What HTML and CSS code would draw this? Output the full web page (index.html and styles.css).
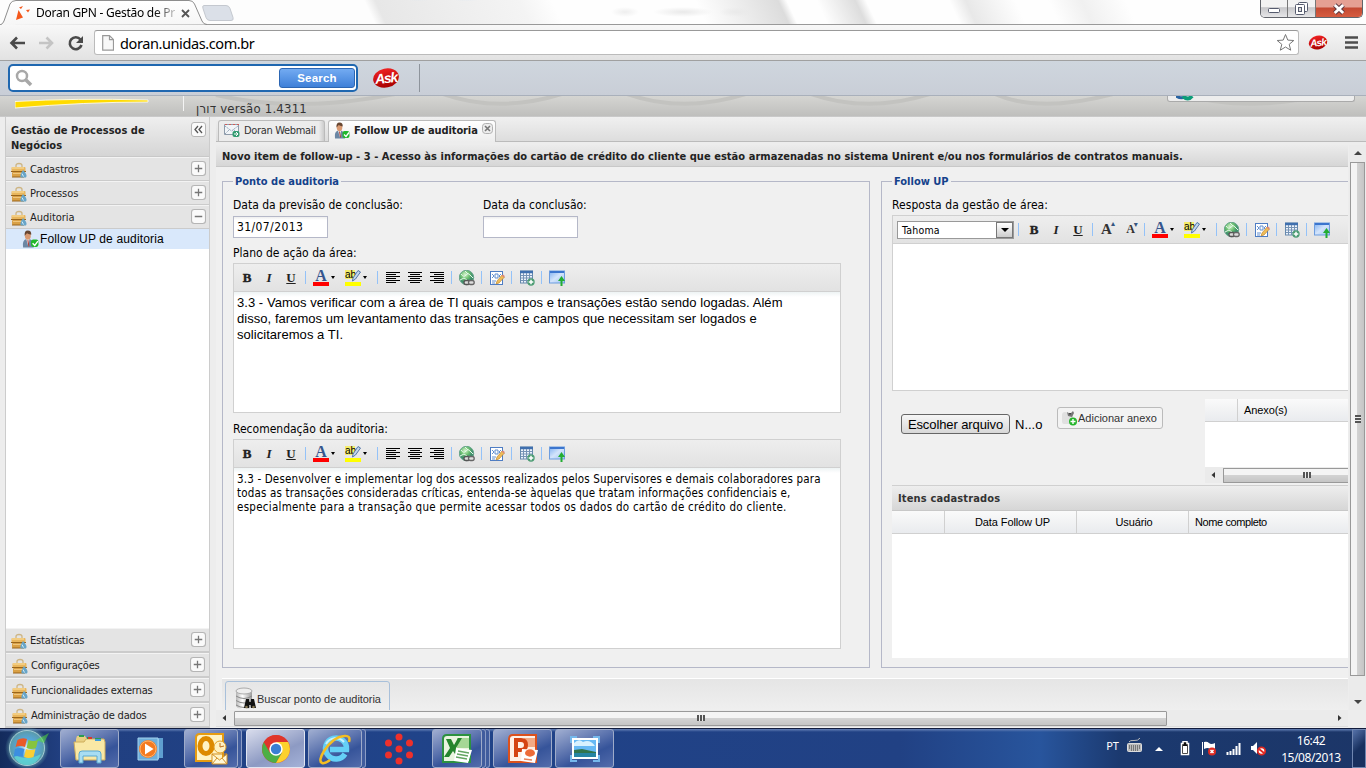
FILE: index.html
```html
<!DOCTYPE html>
<html lang="pt-BR">
<head>
<meta charset="utf-8">
<title>Doran GPN - Gestão de Processos de Negócios</title>
<link rel="stylesheet" href="styles.css">
</head>
<body>
<svg class="defs" width="0" height="0">
  <defs>
    <linearGradient id="gold" x1="0" y1="0" x2="0" y2="1"><stop offset="0" stop-color="#f3cf87"/><stop offset="1" stop-color="#c98a2c"/></linearGradient>
    <linearGradient id="sky" x1="0" y1="0" x2="1" y2="1"><stop offset="0" stop-color="#7fb0f0"/><stop offset=".5" stop-color="#d3e4fb"/><stop offset="1" stop-color="#9cc2f2"/></linearGradient>
    <linearGradient id="red" x1="0" y1="0" x2="0" y2="1"><stop offset="0" stop-color="#ee2222"/><stop offset="1" stop-color="#a80000"/></linearGradient>
    <radialGradient id="orb"><stop offset="0" stop-color="#e8f6ff"/><stop offset=".5" stop-color="#55a8dc"/><stop offset="1" stop-color="#5b9aa8"/></radialGradient>
    <radialGradient id="globe" cx=".4" cy=".3"><stop offset="0" stop-color="#d9f5d0"/><stop offset=".6" stop-color="#6cc070"/><stop offset="1" stop-color="#3f8f6c"/></radialGradient>
    <linearGradient id="steel"><stop offset="0" stop-color="#b5b5b5"/><stop offset=".4" stop-color="#fff"/><stop offset="1" stop-color="#999"/></linearGradient>
  </defs>
  <symbol id="i-case" viewBox="0 0 16 16"><path d="M5 5V3.500q0-2 3-2t3 2V5" fill="none" stroke="#cdb584" stroke-width="1.300"/><rect x=".5" y="5" width="14" height="4.500" rx="1" fill="#e9b65c"/><rect x="1" y="10" width="13" height="5" rx="1" fill="#d9a045"/><path d="M0 9.500h15M1 15h12" stroke="#99651c" fill="none"/><path d="M1 6h12" stroke="#fbe2a6"/><path d="M2 11.500h8" stroke="#f0c67d"/><path d="M12 8q5 5 3 7.500h-5q-2-2 2-7.500z" fill="#68a5c8"/><path d="M11 11.500l1.500 3" stroke="#d3edf8"/></symbol>
  <symbol id="i-user" viewBox="0 0 16 16"><path d="M1 16q-1-7 3-8h3q4 1 4 8z" fill="#6b87a4"/><path d="M4 8h3l-1 7z" fill="#f5f5f5"/><path d="M5.500 9l1 6" stroke="#b33e34"/><ellipse cx="5.500" cy="5" rx="2.800" ry="3.700" fill="#d99a72"/><path d="M2.500 5q-.5-5 3-5t3.200 4q-3-1-4-1.500z" fill="#674631"/><rect x="8.500" y="8.500" width="7" height="7" rx="2" fill="#20b82c"/><path d="M10 12l2 2 3-4" fill="none" stroke="#fff" stroke-width="1.300"/></symbol>
  <symbol id="i-mail" viewBox="0 0 16 16"><path d="M.5 2.500h14v10H.5z" fill="#f2f5f8" stroke="#8e9baa"/><path d="M1 2.500h14" stroke="#d05c58" stroke-dasharray="2 2"/><path d="M1 4l6.500 5L14 4M1 12l5-5m8 5L9 7" fill="none" stroke="#92a5b8" stroke-dasharray="1.500 .7"/><rect x="8.500" y="9" width="7" height="6" rx="2" fill="#309b70"/><path d="M10 12h4m-2-2l2 2-2 2" fill="none" stroke="#fff"/></symbol>
  <symbol id="i-globe" viewBox="0 0 16 16"><circle cx="7.500" cy="7.500" r="7.200" fill="url(#globe)" stroke="#69a58c"/><path d="M2 4q3 4 5 1t4 0l3 3M1 10l4-2 3 2M6 1l3 3" fill="none" stroke="#e3f8e9"/><rect x="5" y="10.500" width="6" height="4" rx="2" fill="#ddd" stroke="#555" stroke-width="1.300"/><rect x="9.500" y="10.500" width="5.700" height="4" rx="2" fill="#ddd" stroke="#666" stroke-width="1.300"/></symbol>
  <symbol id="i-edit" viewBox="0 0 16 16"><rect x="1.500" y="1.500" width="12" height="13" fill="#fff" stroke="#4e7dc4"/><path d="M3 4l2 2-2 2m9-4l-2 2 2 2M6 4h3v4H6zM3 11h4M3 13h3" fill="none" stroke="#628fcf"/><path d="M7 14l1-3 5-6 2.500 2-5.500 6z" fill="#f1bd58" stroke="#b07c2a" stroke-width=".6"/><path d="M12.500 5.500l1.500-1 1.800 1.500-1 1.400z" fill="#de8778"/></symbol>
  <symbol id="i-grid" viewBox="0 0 16 16"><rect x="1.500" y="1" width="12" height="12" fill="#edf3fb" stroke="#6689ad"/><path d="M1 2h13" stroke="#3f6fae" stroke-width="2.500"/><path d="M2 5.500h11M2 8h11M2 10.500h11M4.500 3v10M7.500 3v10M10.500 3v10" stroke="#7693b5"/><circle cx="12" cy="12" r="3.700" fill="#4c9c73"/><path d="M12 9.700v4.600M9.700 12h4.600" stroke="#fff" stroke-width="1.500"/></symbol>
  <symbol id="i-win" viewBox="0 0 16 16"><rect x=".5" y="1" width="15" height="12" fill="url(#sky)" stroke="#6d9ddf"/><path d="M1 2h14" stroke="#3b75ce" stroke-width="2"/><path d="M11.500 16v-5H9l3.500-5L16 11h-2.500v5z" fill="#23ad32"/></symbol>
  <symbol id="i-al" viewBox="0 0 14 12"><path d="M0 .5h14M0 2.500h10M0 4.500h14M0 6.500h10M0 8.500h14M0 10.500h10" stroke="#000"/></symbol>
  <symbol id="i-ac" viewBox="0 0 14 12"><path d="M0 .5h14M2 2.500h10M0 4.500h14M2 6.500h10M0 8.500h14M2 10.500h10" stroke="#000"/></symbol>
  <symbol id="i-ar" viewBox="0 0 14 12"><path d="M0 .5h14M4 2.500h10M0 4.500h14M4 6.500h10M0 8.500h14M4 10.500h10" stroke="#000"/></symbol>
  <symbol id="i-pen" viewBox="0 0 16 12"><path d="M8 8L13 .5l2.500 1.500-5 7L7.500 11z" fill="#c3d7ed" stroke="#5479a8"/></symbol>
  <symbol id="i-plus" viewBox="0 0 14 14"><rect x=".5" y=".5" width="13" height="13" rx="2.500" fill="#fafafa" stroke="#b5b5b5"/><path d="M3.500 7h7M7 3.500v7" stroke="#777" stroke-width="1.200"/></symbol>
</svg>

<header class="titlebar">
  <div class="glass"></div>
  <svg class="tabshape" width="240" height="25" viewBox="0 0 240 25"><defs><linearGradient id="tb" x1="0" y1="0" x2="0" y2="1"><stop offset="0" stop-color="#fff"/><stop offset="1" stop-color="#f6f6f6"/></linearGradient></defs><path d="M0 25Q3 24 4 21L10 4Q11.500.5 16 .5H189Q193 .5 194.500 4L202 21Q203.500 24.500 207 24.500" fill="url(#tb)" stroke="#8e8e8e"/><path d="M204 5.500h22q3 0 4 3l3 9q1 3-2 3h-21q-3 0-4-3l-3-9q-1-3 1-3z" fill="#dbe0e8" stroke="#c4c8cf"/></svg>
  <div class="browser-tab">
    <svg width="16" height="16" viewBox="0 0 16 16"><path d="M1 15L3.500 5 8 12.500zM4 2.500l4-1.500-2 3zM11 5l4-.5-2 3zM12 4l1-1" fill="#f4581c"/></svg>
    <span class="tab-title">Doran GPN - Gestão de Pr</span>
    <svg class="tab-x" width="9" height="9" viewBox="0 0 9 9"><path d="M1 1l7 7M8 1L1 8" stroke="#555" stroke-width="1.800"/></svg>
  </div>
  <div class="wincontrols">
    <span class="wc wc-min"><svg width="14" height="7"><rect x="1.500" y="1.500" width="11" height="4" rx="1" fill="#fff" stroke="#555b6e"/></svg></span>
    <span class="wc wc-max"><svg width="13" height="13"><rect x="3.500" y=".5" width="9" height="9" rx="1" fill="#fff" stroke="#555b6e"/><rect x=".5" y="2.500" width="9" height="10" rx="1" fill="#fff" stroke="#555b6e"/><rect x="3.500" y="5.500" width="3" height="4" fill="#ddd" stroke="#555b6e"/></svg></span>
    <span class="wc wc-close"><svg width="14" height="12" viewBox="0 0 14 12"><path d="M2 2l8.500 8M10.500 2L2 10" transform="translate(.7)" stroke="#5a3840" stroke-width="4.600"/><path d="M2 2l8.500 8M10.500 2L2 10" transform="translate(.7)" stroke="#fff" stroke-width="2.800"/></svg></span>
  </div>
</header>

<nav class="addressbar">
  <svg width="90" height="20" viewBox="0 0 90 20"><path d="M25 10H11.500m5.500-5.500L11.500 10l5.500 5.500" fill="none" stroke="#4a4a4a" stroke-width="2.600"/><path d="M39 10h13m-5.500-5.500L52 10l-5.500 5.500" fill="none" stroke="#c4c4c4" stroke-width="2.600"/><path d="M80.500 6.500A6 6 0 1 0 81.500 12" fill="none" stroke="#4a4a4a" stroke-width="2.600"/><path d="M83 3v7h-7z" fill="#4a4a4a"/></svg>
  <div class="omnibox">
    <svg width="12" height="16" viewBox="0 0 12 16"><path d="M.7.7h6.800l4 4v10.500H.7zM7.500.7v4h4" fill="#f8f8f8" stroke="#999" stroke-width="1.200"/></svg>
    <span class="url">doran.unidas.com.br</span>
    <svg class="star" width="19" height="19" viewBox="0 0 19 19"><path d="M9.500 1.500l2.300 5.600 6 .4-4.600 3.800 1.500 5.900-5.200-3.200-5.200 3.200 1.500-5.900L1.200 7.500l6-.4z" fill="#fff" stroke="#777" stroke-linejoin="round"/></svg>
  </div>
  <svg class="ask-small" width="20" height="17" viewBox="0 0 28 22"><ellipse cx="14" cy="11" rx="13" ry="9.500" fill="url(#red)" transform="rotate(-12 14 11)"/><text x="14" y="16" text-anchor="middle" font-size="14" transform="rotate(-5 14 11)" class="ask-text">Ask</text></svg>
  <svg class="menu" width="13" height="13"><path d="M0 1.500h13M0 6.500h13M0 11.500h13" stroke="#4d4d4d" stroke-width="2.600"/></svg>
</nav>

<section class="askbar">
  <div class="searchbox">
    <svg width="18" height="18" viewBox="0 0 18 18"><circle cx="7" cy="7" r="5" fill="none" stroke="#a8a8a8" stroke-width="2.500"/><path d="M11 11l5 5" stroke="#a8a8a8" stroke-width="3.500"/></svg>
    <button class="searchbtn">Search</button>
  </div>
  <svg class="ask-big" width="28" height="22" viewBox="0 0 28 22"><ellipse cx="14" cy="11" rx="13" ry="9.500" fill="url(#red)" transform="rotate(-12 14 11)"/><text x="14" y="16" text-anchor="middle" font-size="14" transform="rotate(-5 14 11)" class="ask-text">Ask</text></svg>
  <i class="ask-div"></i>
</section>

<section class="appheader">
  <svg class="waves" width="1366" height="20"><g fill="none" stroke="#c3c3c0" stroke-width="4"><path d="M216 -1Q300 18 400 -3M443 -2Q500 18 565 -3M627 -2Q684 18 749 -3M811 -2Q868 18 933 -3M995 -2Q1040 18 1117 -3M1180 -2Q1250 18 1330 -3"/></g></svg>
  <div class="brand"><svg width="136" height="13"><path d="M0 5.500Q60 2 133 4v2Q70 6 0 12z" fill="#ffdb00" stroke="#fff" stroke-width=".8"/></svg></div>
  <span class="version">דורן versão 1.4311</span>
  <div class="headbox"><svg width="20" height="5"><path d="M0 0q5 3 9 1" stroke="#2762a2" stroke-width="3" fill="none"/><path d="M7 0q5 5 9 0" stroke="#0c9c78" stroke-width="4" fill="none"/></svg></div>
</section>

<main class="app">
  <aside class="sidebar">
    <div class="side-head"><span>Gestão de Processos de<br>Negócios</span><svg width="15" height="15"><rect x=".5" y=".5" width="14" height="14" rx="2.500" fill="#fafafa" stroke="#b5b5b5"/><path d="M7 4L4 7.500 7 11M11 4L8 7.500 11 11" fill="none" stroke="#555" stroke-width="1.300"/></svg></div>
    <div class="acc"><svg class="ic"><use href="#i-case"/></svg><span>Cadastros</span><svg class="pm"><use href="#i-plus"/></svg></div>
    <div class="acc"><svg class="ic"><use href="#i-case"/></svg><span>Processos</span><svg class="pm"><use href="#i-plus"/></svg></div>
    <div class="acc"><svg class="ic"><use href="#i-case"/></svg><span>Auditoria</span><svg class="pm" viewBox="0 0 14 14"><rect x=".5" y=".5" width="13" height="13" rx="2.500" fill="#fafafa" stroke="#b5b5b5"/><path d="M3.500 7h7" stroke="#777" stroke-width="1.400"/></svg></div>
    <div class="tree"><div class="node"><svg width="17" height="18"><use href="#i-user"/></svg><span>Follow UP de auditoria</span></div></div>
    <div class="acc low"><svg class="ic"><use href="#i-case"/></svg><span>Estatísticas</span><svg class="pm"><use href="#i-plus"/></svg></div>
    <div class="acc low in"><svg class="ic"><use href="#i-case"/></svg><span>Configurações</span><svg class="pm"><use href="#i-plus"/></svg></div>
    <div class="acc low in"><svg class="ic"><use href="#i-case"/></svg><span>Funcionalidades externas</span><svg class="pm"><use href="#i-plus"/></svg></div>
    <div class="acc low in"><svg class="ic"><use href="#i-case"/></svg><span>Administração de dados</span><svg class="pm"><use href="#i-plus"/></svg></div>
  </aside>

  <section class="content">
    <div class="tabs">
      <div class="tab"><svg width="16" height="16"><use href="#i-mail"/></svg><span>Doran Webmail</span></div>
      <div class="tab active"><svg width="16" height="17"><use href="#i-user"/></svg><span>Follow UP de auditoria</span><svg class="tx" width="11" height="11"><rect x=".5" y=".5" width="10" height="10" rx="3" fill="#ededed" stroke="#b0b0b0"/><path d="M3 3l5 5M8 3L3 8" stroke="#777" stroke-width="1.600"/></svg></div>
    </div>
    <div class="panel">
      <div class="pane">
        <div class="pane-title">Novo item de follow-up - 3 - Acesso às informações do cartão de crédito do cliente que estão armazenadas no sistema Unirent e/ou nos formulários de contratos manuais.</div>
        <div class="sets">
          <fieldset class="fs-left">
            <legend>Ponto de auditoria</legend>
            <div class="dates">
              <label>Data da previsão de conclusão:<span class="field">31/07/2013</span></label>
              <label>Data da conclusão:<span class="field"></span></label>
            </div>
            <div class="lbl">Plano de ação da área:</div>
            <div class="editor ed1">
              <div class="etb"><span class="b">B</span><span class="i">I</span><span class="u">U</span><s></s><span class="drop"><em class="fc">A</em></span><span class="drop"><em class="hl">ab<svg><use href="#i-pen"/></svg></em></span><s></s><span><svg class="al"><use href="#i-al"/></svg></span><span><svg class="al"><use href="#i-ac"/></svg></span><span><svg class="al"><use href="#i-ar"/></svg></span><s></s><span><svg class="ic"><use href="#i-globe"/></svg></span><s></s><span><svg class="ic"><use href="#i-edit"/></svg></span><s></s><span><svg class="ic"><use href="#i-grid"/></svg></span><s></s><span><svg class="ic"><use href="#i-win"/></svg></span></div>
              <div class="text arial">3.3 - Vamos verificar com a área de TI quais campos e transações estão sendo logadas. Além<br>disso, faremos um levantamento das transações e campos que necessitam ser logados e<br>solicitaremos a TI.</div>
            </div>
            <div class="lbl">Recomendação da auditoria:</div>
            <div class="editor ed2">
              <div class="etb"><span class="b">B</span><span class="i">I</span><span class="u">U</span><s></s><span class="drop"><em class="fc">A</em></span><span class="drop"><em class="hl">ab<svg><use href="#i-pen"/></svg></em></span><s></s><span><svg class="al"><use href="#i-al"/></svg></span><span><svg class="al"><use href="#i-ac"/></svg></span><span><svg class="al"><use href="#i-ar"/></svg></span><s></s><span><svg class="ic"><use href="#i-globe"/></svg></span><s></s><span><svg class="ic"><use href="#i-edit"/></svg></span><s></s><span><svg class="ic"><use href="#i-grid"/></svg></span><s></s><span><svg class="ic"><use href="#i-win"/></svg></span></div>
              <div class="text tahoma">3.3 - Desenvolver e implementar log dos acessos realizados pelos Supervisores e demais colaboradores para<br>todas as transações consideradas críticas, entenda-se àquelas que tratam informações confidenciais e,<br><span class="l3">especialmente para a transação que permite acessar todos os dados do cartão de crédito do cliente.</span></div>
            </div>
          </fieldset>
          <fieldset class="fs-right">
            <legend>Follow UP</legend>
            <div class="lbl first">Resposta da gestão de área:</div>
            <div class="editor ed3">
              <div class="etb"><div class="select"><span>Tahoma</span><b></b></div><s></s><span class="b">B</span><span class="i">I</span><span class="u">U</span><s></s><span class="grow">A<sup>▴</sup></span><span class="grow sm">A<sup>▾</sup></span><s></s><span class="drop"><em class="fc">A</em></span><span class="drop"><em class="hl">ab<svg><use href="#i-pen"/></svg></em></span><s></s><span><svg class="ic"><use href="#i-globe"/></svg></span><s></s><span><svg class="ic"><use href="#i-edit"/></svg></span><s></s><span><svg class="ic"><use href="#i-grid"/></svg></span><s></s><span><svg class="ic"><use href="#i-win"/></svg></span></div>
            </div>
            <div class="attach">
              <button class="filebtn">Escolher arquivo</button><span class="fname">N...o</span>
              <div class="addbtn"><svg width="17" height="16" viewBox="0 0 17 16"><path d="M1 5q0-3 3-3l6 1 2 2v9H3q-2 0-2-3z" fill="#e0e0e0"/><path d="M6 2l3 2 3-3 1 2-2 4-4-1z" fill="#777"/><path d="M8 3l1 2 1-2z" fill="#222"/><circle cx="12" cy="11.500" r="4" fill="#26b52c"/><path d="M12 9v5M9.500 11.500h5" stroke="#fff" stroke-width="1.400"/></svg><span>Adicionar anexo</span></div>
              <div class="agrid">
                <div class="ghead"><span class="c0"></span><span>Anexo(s)</span></div>
                <div class="gbody"></div>
                <div class="hs mini"><svg class="arr" width="6" height="8"><path d="M5 1v6L1.500 4z" fill="#333"/></svg><div class="thumb"><i class="grip"></i></div></div>
              </div>
            </div>
            <div class="gtitle">Itens cadastrados</div>
            <div class="ghead items"><span class="k0"></span><span class="k1">Data Follow UP</span><span class="k2">Usuário</span><span class="k3">Nome completo</span></div>
            <div class="itemsbody"></div>
          </fieldset>
        </div>
        <div class="footbar"><div class="search-point"><svg width="24" height="24" viewBox="0 0 24 24"><path d="M3 4v14q0 4 8 4t8-4V4z" fill="url(#steel)"/><ellipse cx="11" cy="4" rx="8" ry="3" fill="#eee" stroke="#aaa"/><path d="M3 9q8 5 16 0M3 13.500q8 5 16 0M3 18q8 5 16 0" fill="none" stroke="#888"/><path d="M13 12h3v3h2v-3h3l2 9h-5v-3h-2v3h-5z" fill="#111"/><circle cx="13.500" cy="20" r="1.300" fill="#887a55"/><circle cx="20.500" cy="20" r="1.300" fill="#887a55"/></svg><span>Buscar ponto de auditoria</span></div></div>
        <div class="hs big"><svg class="arr" width="6" height="8"><path d="M5 1v6L1.500 4z" fill="#333"/></svg><div class="thumb"><i class="grip"></i></div><svg class="arr r" width="6" height="8"><path d="M1 1v6l3.500-3z" fill="#333"/></svg></div>
      </div>
      <div class="vs"><svg class="up" width="8" height="6"><path d="M0 5h8L4 1z" fill="#444"/></svg><div class="vthumb"><i class="vgrip"></i></div><svg class="dn" width="8" height="6"><path d="M0 1h8L4 5z" fill="#444"/></svg></div>
    </div>
  </section>
</main>

<footer class="taskbar">
  <svg class="start" width="54" height="40" viewBox="0 0 54 40"><defs><radialGradient id="glow"><stop offset=".6" stop-color="#7fc0c0"/><stop offset="1" stop-color="#66a8b0" stop-opacity="0"/></radialGradient></defs><circle cx="27" cy="20" r="22" fill="url(#glow)"/><circle cx="27" cy="20" r="17.500" fill="url(#orb)" stroke="#a6cdd5"/><path d="M13 26q13 8 28 0-4 11-14 11T13 26z" fill="#5fe0d8" opacity=".7"/><path d="M17.500 12q4.500-3 9.500-1l-2 8q-5-2-9.500 0z" fill="#e95a29"/><path d="M28.500 12q5 2 9.500 0l-2 8q-5 2-9.500 0z" fill="#86c43f"/><path d="M15 21q5-2 9.500 0l-2 8q-5-2-9 0z" fill="#3c8ee0"/><path d="M26 21q5 2 9.500 0l-2 8q-5 2-9.500 0z" fill="#fbcf34"/><path d="M36 12l13-7-5 10z" fill="#58e734" opacity=".5"/></svg>
  <div class="tk t1"><svg width="34" height="32" viewBox="0 0 34 32"><path d="M3 6l1-3h8l2 3h17v20H3z" fill="#e8cf82"/><path d="M1 9h10l2-3h18l1 3v18H3z" fill="#f9e8a5" stroke="#cfae5c"/><path d="M6 3h5M14 5h5M22 6h6" stroke="#2b9c50" stroke-width="2"/><path d="M15 5h4" stroke="#d8372b" stroke-width="2"/><path d="M22 7h6" stroke="#3d9add" stroke-width="2"/><path d="M6 30v-9q0-3 3-3h16q3 0 3 3v9h-4v-7H10v7z" fill="#a8ddf2" stroke="#5aa8d0"/></svg></div>
  <div class="tk t2 bare"><svg width="28" height="26" viewBox="0 0 28 26"><path d="M7 2h19v20H7z" fill="#5f9fd0"/><path d="M4 3h18v20H4z" fill="#8cc3e6"/><path d="M1 2h20v22H1z" fill="#6eafdb" stroke="#a3d2ee"/><circle cx="11" cy="13" r="9" fill="#f47a20"/><circle cx="11" cy="13" r="8" fill="none" stroke="#ffb36b"/><path d="M8 7.500l8.500 5.500L8 18.500z" fill="#fff"/></svg></div>
  <div class="tk t3"><svg width="34" height="34" viewBox="0 0 34 34"><path d="M2 6q0-4 4-4h23v27H2z" fill="#fff3c4" stroke="#e69c12" stroke-width="2"/><ellipse cx="12" cy="14" rx="6" ry="7.500" fill="none" stroke="#dd8a00" stroke-width="5"/><circle cx="26" cy="15" r="6" fill="#fff2c2" stroke="#e1a02c"/><path d="M26 11v4l4-1" fill="none" stroke="#bf6b19"/><path d="M18 22h15v10H18zM18 22l7.500 6 7.500-6M18 32l5-6m10 6l-5-6" fill="#fff8d8" stroke="#d29125"/></svg></div><i class="stk a"></i>
  <div class="tk t4 on"><svg width="30" height="30" viewBox="0 0 30 30"><circle cx="15" cy="15" r="14" fill="#e33b2e"/><path d="M2.900 8A14 14 0 0 0 15 29l6.100-10.500L9 18.500z" fill="#4caf45"/><path d="M15 29A14 14 0 0 0 27.100 8H15l6.100 10.500z" fill="#fcd12d"/><path d="M2.900 8L9 18.500 15 8h12.100A14 14 0 0 0 2.900 8z" fill="#df352b"/><circle cx="15" cy="15" r="6.700" fill="#fff"/><circle cx="15" cy="15" r="5.200" fill="#397fd2"/></svg></div>
  <div class="tk t5"><svg width="34" height="34" viewBox="0 0 34 34"><path d="M27 22A10.500 10.500 0 1 1 28.500 17.500H12" fill="none" stroke="#65d0f6" stroke-width="5.500"/><path d="M8 12a11 11 0 0 1 18-2" fill="none" stroke="#c5f1ff" stroke-width="2"/><path d="M31 10q2-7-5-6Q15 5 6 19 0 29 4 31q3 1 8-3" fill="none" stroke="#f4bd22" stroke-width="2.500"/></svg></div><i class="stk b"></i>
  <div class="tk t6 bare"><svg width="30" height="32" viewBox="0 0 30 32"><g fill="#ee302b"><circle cx="15" cy="4" r="3.500"/><circle cx="4.500" cy="10" r="3.500"/><circle cx="25.500" cy="10" r="3.500"/><circle cx="15" cy="16" r="3.500"/><circle cx="4.500" cy="22" r="3.500"/><circle cx="25.500" cy="22" r="3.500"/><circle cx="15" cy="28" r="3.500"/></g></svg></div>
  <div class="tk t7"><svg width="32" height="32" viewBox="0 0 32 32"><path d="M2 6q0-4 4-4h23v27H2z" fill="#e9f4df" stroke="#2c9140" stroke-width="2"/><path d="M16 5h12v10H16z" fill="#a6d796"/><path d="M5 6h5l3 6 4-7h4l-6 10 6 9h-5l-4-6-4 6H3l6-9z" fill="#25852d"/><path d="M15 15l16 2-4 13-14-2z" fill="#fff"/><path d="M17 18l11 2M16 21l11 2M15 24l11 2" stroke="#64a563" stroke-width="1.400"/></svg></div><i class="stk c"></i><i class="stk d"></i>
  <div class="tk t8"><svg width="32" height="32" viewBox="0 0 32 32"><path d="M2 6q0-4 4-4h23v27H2z" fill="#fff0e6" stroke="#dc511d" stroke-width="2"/><path d="M17 5h11v9H17z" fill="#f4aa84"/><path d="M9 24V7h5q5 0 5 5t-5 5h-4" fill="none" stroke="#d54412" stroke-width="4"/><path d="M15 16l16 1-3 13-14-2z" fill="#fff"/><ellipse cx="23" cy="20" rx="5" ry="3.700" fill="#ed6b38"/><path d="M17 26l8 1" stroke="#e98057" stroke-width="1.500"/></svg></div>
  <div class="tk t9"><svg width="30" height="26" viewBox="0 0 30 26"><path d="M3 3h24v19H3z" fill="#67b9f4" stroke="#fff" stroke-width="2"/><path d="M4 7q5-5 9-1 7-3 12 4H4z" fill="#d8f1ff"/><path d="M4 14l8-1 14 3v2H4z" fill="#32744c"/><path d="M4 17h22v4H4z" fill="#2684a3"/><path d="M1 7V1h6M23 1h6v6M29 19v6h-6M7 25H1v-6" fill="none" stroke="#75b8ec" stroke-width="2"/></svg></div>
  <div class="tray">
    <span class="lang">PT</span>
    <svg class="kb" width="16" height="15"><rect x=".5" y="5.500" width="14" height="8" rx="1" fill="#bbb" stroke="#ddd"/><path d="M2 8h11M2 10h11M4 12h7" stroke="#333" stroke-dasharray="1 1"/><path d="M2 4q1-2 5-1.500T13 0" fill="none" stroke="#bbb"/></svg>
    <svg class="tri" width="8" height="5"><path d="M0 5l4-4 4 4z" fill="#fff"/></svg>
    <svg class="bat" width="10" height="15"><path d="M3 .5h4v2h1.500v11h-7v-11H3z" fill="#111" stroke="#fff" stroke-width="1.500"/><path d="M3 5h4v7H3z" fill="#fff"/></svg>
    <svg class="flag" width="16" height="15"><path d="M1.500 1v13" stroke="#fff"/><path d="M3 1q3-1 5 1t6 0v6q-3 2-5 0T3 8z" fill="#fff"/><circle cx="11" cy="10.500" r="4" fill="#df2b22"/><path d="M9.500 9l3 3m0-3l-3 3" stroke="#fff" stroke-width="1.500"/></svg>
    <svg class="sig" width="16" height="12"><path d="M1.500 9v3M4.500 8v4M7.500 6v6M10.500 3v9M13.500 0v12" stroke="#fff" stroke-width="2"/></svg>
    <svg class="spk" width="17" height="15"><path d="M1 5h2l4-4v12l-4-4H1z" fill="#fff"/><circle cx="11.500" cy="10" r="3.700" fill="#fff" stroke="#e02720" stroke-width="1.800"/><path d="M9 8l5 4" stroke="#e02720" stroke-width="1.800"/></svg>
    <div class="clock"><span>16:42</span><span>15/08/2013</span></div>
    <i class="peek"></i>
  </div>
</footer>
</body>
</html>
```
FILE: styles.css
```css
* { box-sizing: border-box; }
body { margin: 0; width: 1366px; height: 768px; overflow: hidden; display: flex; flex-direction: column; font-family: "DejaVu Sans Condensed", "DejaVu Sans", sans-serif; font-stretch: condensed; font-size: 12px; color: #000; background: #eee; }
svg { display: block; flex: none; }
.defs { position: absolute; }
button { font: inherit; padding: 0; margin: 0; }

/* browser chrome */
.titlebar { height: 25px; flex: none; position: relative; display: flex; justify-content: space-between; background: #fdfdfd; border-bottom: 1px solid #999; }
.glass { position: absolute; inset: 0; background: radial-gradient(ellipse at 418px 0, #d3e2f3, transparent 22px), radial-gradient(ellipse at 466px 0, #d5e3f3, transparent 22px), radial-gradient(ellipse 14px 5px at 625px 12px, #eee, transparent), radial-gradient(ellipse 30px 5px at 683px 12px, #e9e9e9, transparent), radial-gradient(ellipse 18px 5px at 737px 12px, #e9e9e9, transparent), linear-gradient(65deg, transparent 340px, #e7e7e7 350px, #f4f4f4 480px, #fefefe 510px, #fefefe 640px, #dcdcdc 715px, #fefefe 723px, #fefefe 750px, #ddd 785px, #fefefe 795px, #fefefe 870px, #e8e8e8 885px, #fefefe 930px, #fefefe 960px, #f0f0f0 990px, #fefefe 1030px); }
.tabshape { position: absolute; left: 0; top: 0; }
.browser-tab { position: relative; display: flex; align-items: center; height: 25px; padding-left: 15px; }
.tab-title { font-family: "Noto Sans", sans-serif; font-size: 12px; width: 139px; margin-left: 5px; white-space: nowrap; letter-spacing: -.27px; background: linear-gradient(90deg, #000 118px, #bbb 138px); -webkit-background-clip: text; color: transparent; }
.tab-x { margin-left: 6px; margin-top: 2px; }
.wincontrols { position: relative; display: flex; width: 103px; height: 18px; margin-right: 3px; border: 1px solid #61646b; border-top: 0; border-radius: 0 0 5px 5px; overflow: hidden; }
.wc { display: flex; align-items: center; justify-content: center; width: 28px; background: linear-gradient(#f2f2f2 0 40%, #c7c7ca 45%, #e6e6e8); border-right: 1px solid #777; }
.wc-min { padding-top: 3px; }
.wc-close { width: 47px; border: 0; background: linear-gradient(#e5a093 0 40%, #c44a33 48%, #d65c40); }
.addressbar { height: 36px; flex: none; display: flex; align-items: center; background: linear-gradient(#f8f8f8, #e2e2e2); border-bottom: 1px solid #a0a0a0; }
.omnibox { display: flex; align-items: center; margin-left: 4px; width: 1205px; height: 25px; background: #fff; border: 1px solid #bbb; border-top-color: #999; border-radius: 3px; padding-left: 7px; }
.url { font-family: "Noto Sans", sans-serif; font-size: 14.500px; letter-spacing: -.4px; margin-left: 6px; }
.star { margin-left: auto; margin-right: 3px; }
.ask-small { margin-left: 9px; }
.menu { margin-left: 17px; }
.ask-text { fill: #fff; font-family: "Liberation Sans", sans-serif; font-weight: bold; font-style: italic; letter-spacing: -1.200px; }
.askbar { height: 35px; flex: none; display: flex; align-items: center; padding-left: 8px; background: linear-gradient(#cfd6de, #c9ced7); border-bottom: 1px solid #a9b0bb; }
.searchbox { display: flex; align-items: center; justify-content: space-between; width: 350px; height: 28px; border: 2px solid #1f67b0; border-radius: 5px; background: #fff; padding: 0 1px 0 5px; }
.searchbtn { width: 76px; height: 20px; border: 1px solid #2c66b3; border-radius: 3px; color: #fff; background: linear-gradient(#73abf2, #3f80d8); font: bold 11.500px "Liberation Sans", sans-serif; letter-spacing: .2px; }
.ask-big { margin-left: 14px; }
.ask-div { width: 1px; height: 28px; margin-left: 19px; background: #8e949c; }

/* application header */
.appheader { height: 21px; flex: none; position: relative; display: flex; overflow: hidden; background: linear-gradient(#d5d5d2, #bfbfbd); border-bottom: 1px solid #c9c9c9; }
.waves { position: absolute; left: 0; top: 0; }
.brand { position: relative; width: 184px; height: 15px; padding-left: 15px; border-right: 1px solid #f4f4f4; }
.version { position: relative; margin: 4px 0 0 12px; font: 13px/17px "DejaVu Sans Condensed", "DejaVu Sans", sans-serif; color: #333; white-space: nowrap; letter-spacing: .22px; }
.headbox { position: relative; margin: 0 11px 0 auto; width: 188px; height: 6px; padding-left: 8px; border: 1px solid #aaa; border-top: 0; border-radius: 0 0 3px 3px; background: #ededed; }

.app { height: 611px; flex: none; display: flex; padding-left: 5px; background: #ededed; }
.sidebar { width: 205px; flex: none; display: flex; flex-direction: column; border: solid #ccc; border-width: 0 1px; background: #fff; }
.side-head { height: 40px; flex: none; display: flex; justify-content: space-between; padding: 5px 3px 0 5px; background: linear-gradient(#efefef, #d5d5d5); border-bottom: 1px solid #c8c8c8; color: #222; font: bold 11px/15px "DejaVu Sans Condensed", "DejaVu Sans", sans-serif; white-space: nowrap; letter-spacing: .04px; }
.side-head span { margin-top: 1px; }
.acc { height: 24px; flex: none; display: flex; align-items: center; padding: 0 3px 0 5px; background: #e4e4e4; border-top: 1px solid #f3f3f3; border-bottom: 1px solid #cbcbcb; color: #222; font-size: 11px; letter-spacing: -.05px; }
.acc .ic { width: 16px; height: 16px; margin-top: 1px; }
.acc span { margin-left: 3px; }
.pm { width: 15px; height: 15px; margin-left: auto; margin-top: -2px; }
.acc.low { height: 25px; border-bottom-width: 2px; letter-spacing: -.18px; }
.acc.in { padding: 0 4px 0 6px; }
.tree { flex: 1; }
.node { height: 20px; display: flex; align-items: center; padding-left: 16px; background: #d9e8fb; font: 12px "Liberation Sans", sans-serif; letter-spacing: .15px; }
.node span { margin-left: 1px; white-space: nowrap; }

.content { flex: none; width: 1150px; margin-left: 6px; display: flex; flex-direction: column; }
.tabs { height: 25px; flex: none; display: flex; align-items: flex-end; gap: 3px; padding: 0 0 0 2px; background: linear-gradient(#f0f0f0, #ddd); border-bottom: 1px solid #bbb; }
.tab { height: 21px; width: 107px; display: flex; align-items: center; gap: 4px; padding: 0 0 2px 5px; border: 1px solid #bbb; border-bottom: 0; border-radius: 3px 3px 0 0; background: linear-gradient(90deg, #ececec 95%, #ccc); color: #333; font-size: 11px; letter-spacing: -.33px; white-space: nowrap; }
.tab.active { width: 168px; height: 22px; background: linear-gradient(#fff, #ededed); font-weight: bold; margin-bottom: -1px; letter-spacing: -.1px; color: #222; }
.tx { align-self: flex-start; margin-top: 2px; }
.panel { flex: 1; display: flex; padding-top: 3px; min-height: 0; }
.pane { width: 1132px; overflow: hidden; display: flex; flex-direction: column; background: #f0f0f0; }
.pane-title { height: 22px; flex: none; padding: 0 0 0 6px; line-height: 23px; background: linear-gradient(#ececec, #d6d6d6); border-bottom: 1px solid #c8c8c8; color: #222; font-size: 11px; font-weight: bold; white-space: nowrap; letter-spacing: .043px; }
.sets { height: 511px; flex: none; display: flex; padding: 7px 0 0 6px; gap: 11px; }
fieldset { margin: 0; padding: 0 10px; min-width: 0; height: 494px; border: 1px solid #b5b8c8; flex: none; }
.fs-left { width: 648px; }
.fs-right { width: 700px; }
legend { height: 14px; padding: 0 2px; margin: 0; line-height: 15px; font-size: 11px; font-weight: bold; color: #15428b; }
.dates { display: flex; height: 53px; padding-top: 7px; }
.dates label { width: 250px; line-height: 20px; }
.field { display: block; width: 95px; height: 22px; margin-top: 1px; padding-left: 3px; border: 1px solid #b5b8c8; background: linear-gradient(#eee, #fff 3px); line-height: 21px; font-size: 12px; letter-spacing: .4px; }
.lbl { height: 20px; line-height: 20px; margin-top: 2px; white-space: nowrap; }
.lbl.first { margin-top: 7px; letter-spacing: .07px; }
.editor { border: 1px solid #d0d0d0; background: #fff; width: 608px; overflow: hidden; }
.ed1 { height: 150px; margin-bottom: 6px; }
.ed2 { height: 210px; }
.ed3 { height: 176px; width: 600px; }
.etb { display: flex; align-items: center; height: 28px; padding: 0 0 0 2px; background: linear-gradient(#eee, #e2e2e2); border-bottom: 1px solid #d0d0d0; }
.etb > span { width: 22px; display: flex; justify-content: center; align-items: center; flex: none; }
.etb s { width: 8px; height: 13px; flex: none; background: linear-gradient(#94c2f8, #94c2f8) 3px 0 / 1px 100% no-repeat; }
.etb .b, .etb .i, .etb .u { font: bold 13px "Liberation Serif", serif; color: #222; }
.etb .b { font-weight: 900; -webkit-text-stroke: .4px #222; }
.etb .i { font-style: italic; }
.etb .u { text-decoration: underline; }
.etb .ic { width: 16px; height: 16px; }
.al { width: 14px; height: 12px; }
.etb .drop { width: 32px; justify-content: flex-start; padding-left: 3px; gap: 2px; }
.drop::after { content: ""; border: solid transparent; border-width: 3px 2.500px 0; border-top-color: #000; }
.drop em { width: 16px; height: 16px; font-style: normal; border-bottom: 4px solid red; text-align: center; }
.fc { font: bold 16px/12px "Liberation Serif", serif; color: #36558e; }
.drop .hl { position: relative; border-color: #ff0; font: 10px/9px "Liberation Sans", sans-serif; text-align: left; background: linear-gradient(#f4ec6a, #f4ec6a) 0 0 / 10px 9px no-repeat; }
.hl svg { position: absolute; left: 0; top: 0; width: 16px; height: 12px; }
.grow { font: bold 15px "Liberation Serif", serif; color: #333; }
.grow.sm { font-size: 12px; padding-left: 4px; }
.grow sup { font: 8px "DejaVu Sans", sans-serif; color: #35557f; align-self: flex-start; margin: -2px 0 0 -1px; }
.text { padding: 3px; white-space: nowrap; background: linear-gradient(#eef3f4, #fff 5px); }
.arial { font: 13px/16px "Liberation Sans", sans-serif; letter-spacing: .045px; }
.tahoma { font-size: 11.500px; line-height: 14px; padding-top: 4px; letter-spacing: .165px; }
.l3 { letter-spacing: .27px; }
.select { width: 117px; height: 18px; margin: 0 1px 0 2px; display: flex; background: #fff; border: 1px solid #999; }
.select span { flex: 1; padding-left: 4px; line-height: 16px; font-size: 10.500px; letter-spacing: .2px; }
.select b { width: 17px; border: 1px solid #777; background: linear-gradient(#fff, #ccc); display: flex; align-items: center; justify-content: center; }
.select b::after { content: ""; border: solid transparent; border-width: 4px 4px 0; border-top-color: #000; }
.attach { display: flex; height: 84px; margin-top: 8px; padding-left: 9px; width: 714px; font: 13px "Liberation Sans", sans-serif; }
.filebtn { width: 109px; height: 20px; margin-top: 15px; border: 1px solid #666; border-radius: 3px; background: linear-gradient(#f6f6f6, #d8d8d8); flex: none; white-space: nowrap; letter-spacing: -.1px; }
.fname { margin: 18px 0 0 5px; width: 42px; flex: none; }
.addbtn { width: 106px; height: 22px; margin-top: 8px; display: flex; align-items: center; padding-left: 3px; border: 1px solid #bbb; border-radius: 3px; background: #f3f3f3; color: #333; font-size: 11px; white-space: nowrap; flex: none; }
.agrid { width: 400px; height: 84px; margin-left: 42px; display: flex; flex-direction: column; flex: none; background: #fff; }
.ghead { display: flex; height: 23px; flex: none; background: linear-gradient(#fafafa, #e9ebee); border-bottom: 1px solid #d0d0d0; font: 11px/23px "Liberation Sans", sans-serif; letter-spacing: -.1px; }
.ghead .c0 { width: 33px; border-right: 1px solid #d0d0d0; margin-right: 6px; }
.gbody { flex: 1; }
.gtitle { height: 26px; margin-top: 2px; padding-left: 6px; line-height: 25px; width: 600px; border-top: 1px solid #d0d0d0; border-bottom: 1px solid #c8c8c8; background: linear-gradient(#eee, #d6d6d6); font-size: 11px; font-weight: bold; color: #333; letter-spacing: .15px; }
.items { width: 600px; height: 23px; }
.items span { border-right: 1px solid #d0d0d0; text-align: center; }
.k0 { width: 53px; } .k1 { width: 132px; padding-left: 4px; } .k2 { width: 112px; padding-left: 3px; }
.items .k3 { border: 0; padding-left: 6px; text-align: left; letter-spacing: -.4px; }
.itemsbody { width: 600px; height: 124px; background: #fff; }
.footbar { height: 32px; flex: none; padding: 2px 0 0 3px; margin-left: 6px; background: linear-gradient(#e5e5e5, #efefef); border-top: 1px solid #fff; overflow: hidden; }
.search-point { width: 165px; height: 36px; display: flex; align-items: center; padding-left: 7px; border: 1px solid #a8c0da; border-radius: 3px; color: #333; font: 11px "Liberation Sans", sans-serif; letter-spacing: -.06px; }
.search-point span { white-space: nowrap; }

/* scrollbars */
.hs { display: flex; align-items: center; background: #ebebeb; flex: none; }
.hs.big { height: 17px; border-bottom: 1px solid #ddd; }
.hs.mini { height: 16px; }
.arr { margin: 0 7px 0 5px; }
.mini .arr { margin-right: 6px; }
.thumb { width: 933px; height: 15px; display: flex; align-items: center; justify-content: center; border: 1px solid #999; border-radius: 1px; background: linear-gradient(#f4f4f4 0 45%, #d2d2d2 50%, #c5c5c5); }
.mini .thumb { width: 170px; margin: 0 0 0 1px; padding-right: 0; }
.mini .thumb { width: 169px; justify-content: flex-start; padding-left: 79px; border-right: 0; flex: 1; }
.arr.r { margin: 0 5px 0 auto; }
.grip { width: 8px; height: 6px; background: repeating-linear-gradient(90deg, #555 0 2px, #eee 2px 3px); }
.vs { width: 17px; margin-left: 1px; display: flex; flex-direction: column; align-items: center; height: 565px; background: #ebebeb; }
.up { margin: 5px 0 6px; }
.vthumb { width: 15px; height: 514px; display: flex; align-items: center; justify-content: center; border: 1px solid #999; background: linear-gradient(90deg, #f4f4f4 0 45%, #d2d2d2 50%, #c5c5c5); }
.vgrip { width: 6px; height: 8px; background: repeating-linear-gradient(#555 0 2px, #eee 2px 3px); }
.dn { margin-top: 23px; }

/* taskbar */
.taskbar { height: 40px; flex: none; display: flex; border-top: 1px solid #111c3d; background: linear-gradient(#6480b6, transparent 3px), linear-gradient(90deg, #132b5c, #213f80 60px, #204389 400px, #214184 900px, #28559d 1040px, #1b396f 1120px, #1c3668 1366px); }
.start { margin-top: -1px; width: 54px; }
.tk { height: 39px; display: flex; align-items: center; justify-content: center; flex: none; border: 1px solid #9eabc9; border-radius: 3px; background: linear-gradient(155deg, #a0aed1 0, #5870ac 45%, #36549a 65%, #536cab); }
.tk.bare { border-color: transparent; background: none; }
.tk.on { background: linear-gradient(155deg, #d8dcec, #8d9ac3 60%, #a4b2d8); border-color: #e0e5f1; }
.t1 { width: 59px; margin-left: 6px; } .t2 { width: 60px; margin-left: 2px; } .t3 { width: 54px; margin-left: 3px; }
.t4 { width: 59px; margin-left: 4px; } .t5 { width: 54px; margin-left: 3px; } .t6 { width: 62px; margin-left: 2px; }
.t7 { width: 50px; margin-left: 2px; } .t8 { width: 59px; margin-left: 3px; } .t9 { width: 59px; margin-left: 3px; }
.stk { width: 4px; height: 39px; flex: none; border: solid #8b9cc5; border-width: 1px 1px 1px 0; border-radius: 0 3px 3px 0; background: #405c9d; }
.tray { margin-left: auto; display: flex; align-items: center; color: #fff; font: 12px "Noto Sans", sans-serif; height: 39px; }
.lang { font-size: 11px; margin-bottom: 6px; }
.kb { margin: 0 0 6px 8px; }
.tri { margin-left: 12px; }
.bat { margin-left: 17px; } .flag { margin-left: 11px; } .sig { margin-left: 9px; } .spk { margin-left: 8px; }
.clock { width: 74px; margin-left: 7px; display: flex; flex-direction: column; align-items: center; line-height: 17px; letter-spacing: -.42px; }
.peek { width: 14px; height: 39px; margin-left: 4px; border: 1px solid #7086b0; background: linear-gradient(135deg, #5672a9, #18305f 50%); }
```
